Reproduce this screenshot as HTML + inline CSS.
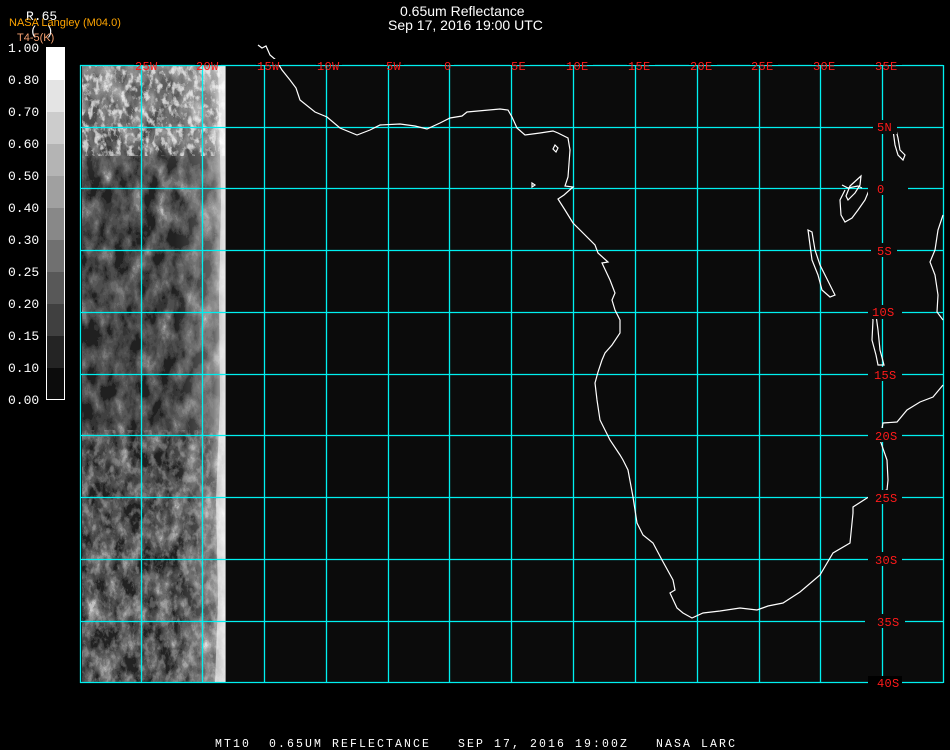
<!DOCTYPE html>
<html><head><meta charset="utf-8"><style>
html,body{margin:0;padding:0;background:#000;width:950px;height:750px;overflow:hidden}
svg{display:block}
.m{font-family:"Liberation Mono",monospace;font-size:12px;fill:#ff1a1a;letter-spacing:0.3px}
.w{font-family:"Liberation Mono",monospace;font-size:13px;fill:#fff}
</style></head><body>
<svg width="950" height="750" viewBox="0 0 950 750" xmlns="http://www.w3.org/2000/svg">
<defs>
<filter id="cl" x="0" y="0" width="100%" height="100%" color-interpolation-filters="sRGB">
<feTurbulence type="fractalNoise" baseFrequency="0.07 0.04" numOctaves="5" seed="7"/>
<feColorMatrix type="matrix" values="1.7 0 0 0 -0.5  1.7 0 0 0 -0.5  1.7 0 0 0 -0.5  0 0 0 0 1"/>
<feComponentTransfer>
<feFuncR type="discrete" tableValues="0.14 0.22 0.28 0.33 0.38 0.44 0.52 0.62 0.78"/>
<feFuncG type="discrete" tableValues="0.14 0.22 0.28 0.33 0.38 0.44 0.52 0.62 0.78"/>
<feFuncB type="discrete" tableValues="0.14 0.22 0.28 0.33 0.38 0.44 0.52 0.62 0.78"/>
</feComponentTransfer>
</filter>
<filter id="cl2" x="0" y="0" width="100%" height="100%" color-interpolation-filters="sRGB">
<feTurbulence type="fractalNoise" baseFrequency="0.18 0.12" numOctaves="3" seed="3"/>
<feColorMatrix type="matrix" values="0 0 0 0 1  0 0 0 0 1  0 0 0 0 1  2.6 0 0 0 -1.1"/>
<feComponentTransfer><feFuncA type="discrete" tableValues="0 0.4 0.8 1"/></feComponentTransfer>
</filter>
<linearGradient id="gh" x1="0" y1="0" x2="1" y2="0">
<stop offset="0.65" stop-color="#fff" stop-opacity="0"/><stop offset="0.92" stop-color="#fff" stop-opacity="0.3"/><stop offset="1" stop-color="#fff" stop-opacity="0.7"/>
</linearGradient>
<linearGradient id="gt" x1="0" y1="0" x2="0" y2="1">
<stop offset="0" stop-color="#fff" stop-opacity="0.3"/><stop offset="0.12" stop-color="#fff" stop-opacity="0.15"/><stop offset="0.2" stop-color="#000" stop-opacity="0.05"/><stop offset="0.6" stop-color="#000" stop-opacity="0.1"/><stop offset="1" stop-color="#000" stop-opacity="0"/>
</linearGradient>
</defs>

<text x="400" y="16" font-family="Liberation Sans,sans-serif" font-size="14" fill="#fff">0.65um Reflectance</text>
<text x="388" y="30" font-family="Liberation Sans,sans-serif" font-size="14" fill="#fff">Sep 17, 2016 19:00 UTC</text>
<text x="26" y="20" class="w" font-size="11">R.65</text>
<text x="9" y="26" font-family="Liberation Sans,sans-serif" font-size="11" fill="#ffa500">NASA Langley (M04.0)</text>
<text x="30" y="35" class="w" font-size="11">( )</text>
<text x="17" y="41" font-family="Liberation Sans,sans-serif" font-size="11" fill="#f5a070">T4-5(K)</text>

<g>
<rect x="46" y="47" width="19" height="33" fill="#fff"/>
<rect x="46" y="80" width="19" height="32" fill="#e4e4e4"/>
<rect x="46" y="112" width="19" height="32" fill="#cccccc"/>
<rect x="46" y="144" width="19" height="32" fill="#b4b4b4"/>
<rect x="46" y="176" width="19" height="32" fill="#a0a0a0"/>
<rect x="46" y="208" width="19" height="32" fill="#888"/>
<rect x="46" y="240" width="19" height="32" fill="#707070"/>
<rect x="46" y="272" width="19" height="32" fill="#585858"/>
<rect x="46" y="304" width="19" height="32" fill="#404040"/>
<rect x="46" y="336" width="19" height="32" fill="#242424"/>
<rect x="46" y="368" width="19" height="32" fill="#0c0c0c"/>
<rect x="46.5" y="47.5" width="18" height="352" fill="none" stroke="#fff"/>
</g>
<g class="w">
<text x="8" y="52">1.00</text><text x="8" y="84">0.80</text><text x="8" y="116">0.70</text>
<text x="8" y="148">0.60</text><text x="8" y="180">0.50</text><text x="8" y="212">0.40</text>
<text x="8" y="244">0.30</text><text x="8" y="276">0.25</text><text x="8" y="308">0.20</text>
<text x="8" y="340">0.15</text><text x="8" y="372">0.10</text><text x="8" y="404">0.00</text>
</g>

<rect x="80" y="65" width="863" height="618" fill="#0b0b0b"/>
<g>
<rect x="82" y="66" width="143" height="617" fill="#555" filter="url(#cl)"/>
<rect x="82" y="66" width="143" height="617" fill="url(#gt)"/>
<rect x="82" y="66" width="143" height="90" filter="url(#cl2)" opacity="0.7"/>
<rect x="82" y="430" width="143" height="253" filter="url(#cl2)" opacity="0.25"/>
<rect x="82" y="66" width="143" height="617" fill="url(#gh)"/>
<path d="M218 66 L226 66 L226 683 L215 683 L218 600 L216 500 L220 400 L219 300 L221 200 Z" fill="#fff" opacity="0.55"/>
</g>

<g stroke="#00f0f0" stroke-width="1.3" fill="none">
<path d="M80.5 65V683M141.5 65V683M202.5 65V683M264.5 65V683M326.5 65V683M388.5 65V683M449.5 65V683M511.5 65V683M573.5 65V683M635.5 65V683M697.5 65V683M759.5 65V683M820.5 65V683M882.5 65V683M943.5 65V683"/>
<path d="M80 65.5H943M80 127.5H943M80 188.5H943M80 250.5H943M80 312.5H943M80 374.5H943M80 435.5H943M80 497.5H943M80 559.5H943M80 621.5H943M80 682.5H943"/>
</g>

<g stroke="#fff" stroke-width="1.2" fill="none">
<path d="M258 45 L262 48 L266 46 L270 55 L276 60 L282 70 L290 80 L296 88 L300 100 L315 112 L327 117 L340 128 L357 135 L370 130 L380 125 L400 124 L415 126 L423 128 L427 129 L440 123 L450 118 L462 116 L467 112 L500 109 L508 110 L512 117 L517 128 L525 135 L540 133 L553 131 L558 133 L568 138 L570 150 L568 177 L565 186 L573 187 L564 195 L558 199 L565 210 L573 223 L595 245 L598 253 L608 262 L602 263 L610 280 L615 293 L612 300 L615 310 L620 320 L620 333 L612 345 L605 353 L602 360 L598 372 L595 383 L597 400 L600 420 L610 440 L620 455 L623 460 L628 470 L633 497 L637 523 L643 535 L653 543 L662 560 L673 580 L675 590 L670 593 L677 608 L683 613 L692 618 L703 613 L720 611 L740 608 L757 610 L768 606 L783 603 L800 592 L820 575 L833 553 L850 543 L853 513 L853 507 L867 498"/>
<path d="M867 498 L880 492 L887 490 L888 480 L887 460 L880 440 L883 423 L897 422 L907 410 L920 402 L933 397 L943 385"/>
<path d="M943 215 L938 230 L935 250 L930 262 L935 275 L938 295 L937 312 L943 320"/>
<path d="M861 176 L850 186 L846 196 L848 200 L855 193 L860 185 Z"/>
<path d="M842 185 L848 188 L858 186 L862 188 M845 190 L840 200 L841 215 L845 222 L852 218 L855 214 L858 210 L865 200 L870 188 L876 186 L878 190"/>
<path d="M893 130 L895 145 L898 155 L903 160 L905 155 L900 150 L898 138 L896 130 Z"/>
<path d="M808 230 L810 245 L812 260 L818 275 L822 290 L830 297 L835 295 L830 285 L825 275 L820 265 L815 250 L812 232 Z"/>
<path d="M870 307 L873 320 L872 340 L876 355 L878 365 L884 365 L880 350 L878 330 L876 315 Z"/>
<path d="M532 183 L535 185 L532 187 Z"/>
<path d="M555 145 L558 148 L556 152 L553 149 Z"/>
</g>

<g class="m">
<rect x="134" y="59" width="26" height="6" fill="#000"/>
<rect x="195" y="59" width="26" height="6" fill="#000"/>
<rect x="256" y="59" width="26" height="6" fill="#000"/>
<rect x="316" y="59" width="26" height="6" fill="#000"/>
<rect x="384" y="59" width="20" height="6" fill="#000"/>
<rect x="442" y="59" width="12" height="6" fill="#000"/>
<rect x="510" y="59" width="20" height="6" fill="#000"/>
<rect x="565" y="59" width="28" height="6" fill="#000"/>
<rect x="627" y="59" width="28" height="6" fill="#000"/>
<rect x="689" y="59" width="28" height="6" fill="#000"/>
<rect x="750" y="59" width="28" height="6" fill="#000"/>
<rect x="812" y="59" width="28" height="6" fill="#000"/>
<rect x="874" y="59" width="28" height="6" fill="#000"/>
<text x="135" y="70">25W</text><text x="196" y="70">20W</text><text x="257" y="70">15W</text>
<text x="317" y="70">10W</text><text x="386" y="70">5W</text><text x="444" y="70">0</text>
<text x="511" y="70">5E</text><text x="566" y="70">10E</text><text x="628" y="70">15E</text>
<text x="690" y="70">20E</text><text x="751" y="70">25E</text><text x="813" y="70">30E</text>
<text x="875" y="70">35E</text>
</g>
<g class="m">
<rect x="873" y="120" width="24" height="14" fill="#0b0b0b"/><text x="877" y="131">5N</text>
<rect x="868" y="181" width="40" height="14" fill="#0b0b0b"/><text x="877" y="193">0</text>
<rect x="871" y="243" width="26" height="14" fill="#0b0b0b"/><text x="877" y="255">5S</text>
<rect x="868" y="305" width="34" height="14" fill="#0b0b0b"/><text x="872" y="316">10S</text>
<rect x="868" y="367" width="34" height="14" fill="#0b0b0b"/><text x="874" y="379">15S</text>
<rect x="868" y="428" width="34" height="14" fill="#0b0b0b"/><text x="875" y="440">20S</text>
<rect x="868" y="490" width="34" height="14" fill="#0b0b0b"/><text x="875" y="502">25S</text>
<rect x="868" y="552" width="34" height="14" fill="#0b0b0b"/><text x="875" y="564">30S</text>
<rect x="865" y="614" width="40" height="14" fill="#0b0b0b"/><text x="877" y="626">35S</text>
<rect x="868" y="676" width="34" height="10" fill="#000"/><text x="877" y="687">40S</text>
</g>

<text x="215" y="747" xml:space="preserve" style="white-space:pre" font-family="Liberation Mono,monospace" font-size="11.5" fill="#fff" letter-spacing="2.1">MT10  0.65UM REFLECTANCE   SEP 17, 2016 19:00Z   NASA LARC</text>
</svg>
</body></html>
